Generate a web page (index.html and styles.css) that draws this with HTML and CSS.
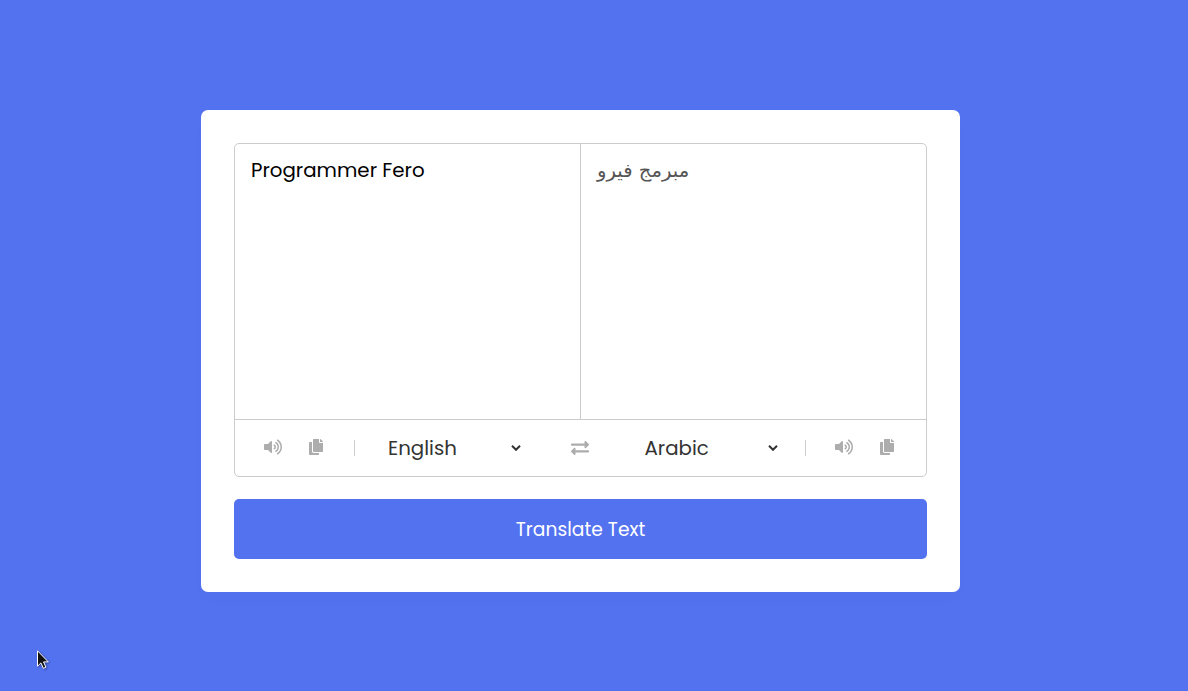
FILE: index.html
```html
<!DOCTYPE html>
<html lang="en">
<head>
<meta charset="utf-8">
<title>Translator</title>
<link rel="stylesheet" href="styles.css">
</head>
<body>
<svg class="sprite" aria-hidden="true">
  <symbol id="volume" viewBox="0 0 576 512"><path d="M215.03 71.05L126.06 160H24c-13.26 0-24 10.74-24 24v144c0 13.25 10.74 24 24 24h102.06l88.97 88.95c15.03 15.03 40.97 4.47 40.97-16.97V88.02c0-21.46-25.96-31.98-40.97-16.97zm233.32-51.08c-11.17-7.33-26.18-4.24-33.51 6.95-7.34 11.17-4.22 26.18 6.95 33.51 66.27 43.49 105.82 116.6 105.82 195.58 0 78.98-39.55 152.09-105.82 195.58-11.17 7.32-14.29 22.34-6.95 33.5 7.04 10.71 21.93 14.56 33.51 6.95C528.27 439.58 576 351.33 576 256S528.27 72.43 448.35 19.97zM480 256c0-63.53-32.06-121.94-85.77-156.24-11.19-7.14-26.03-3.82-33.12 7.46s-3.78 26.21 7.41 33.36C408.27 165.97 432 209.6 432 256s-23.73 90.02-63.48 115.42c-11.19 7.14-14.5 22.07-7.41 33.36 6.51 10.36 21.12 15.14 33.12 7.46C447.94 377.94 480 319.53 480 256zm-141.77-76.87c-11.58-6.33-26.19-2.16-32.61 9.45-6.39 11.61-2.16 26.2 9.45 32.61C327.98 228.28 336 241.63 336 256c0 14.38-8.02 27.72-20.92 34.81-11.61 6.41-15.84 21-9.45 32.61 6.43 11.66 21.05 15.8 32.61 9.45 28.23-15.55 45.77-45 45.77-76.88s-17.54-61.32-45.78-76.86z"/></symbol>
  <symbol id="copy" viewBox="0 0 448 512"><path d="M320 448v40c0 13.255-10.745 24-24 24H24c-13.255 0-24-10.745-24-24V120c0-13.255 10.745-24 24-24h72v296c0 30.879 25.121 56 56 56h168zm0-344V0H152c-13.255 0-24 10.745-24 24v368c0 13.255 10.745 24 24 24h272c13.255 0 24-10.745 24-24V128H344c-13.2 0-24-10.8-24-24zm120.971-31.029L375.029 7.029A24 24 0 0 0 358.059 0H352v96h96v-6.059a24 24 0 0 0-7.029-16.97z"/></symbol>
  <symbol id="chevron" viewBox="0 0 10 6"><path d="M1 .8l4 4 4-4" fill="none" stroke="currentColor" stroke-width="2"/></symbol>
</svg>
<main class="container">
  <div class="wrapper">
    <div class="text-input">
      <div class="field from-text">Programmer Fero</div>
      <div class="field to-text" lang="ar">مبرمج فيرو</div>
    </div>
    <div class="controls">
      <div class="icons from">
        <svg class="icon volume"><use href="#volume"/></svg>
        <svg class="icon copy"><use href="#copy"/></svg>
      </div>
      <div class="select from"><span>English</span><svg class="chevron"><use href="#chevron"/></svg></div>
      <svg class="icon exchange" viewBox="0 0 512 512"><path d="M0 168v-16c0-13.255 10.745-24 24-24h360V80c0-21.367 25.899-32.042 40.971-16.971l80 80c9.372 9.373 9.372 24.569 0 33.941l-80 80C409.956 271.982 384 261.456 384 240v-48H24c-13.255 0-24-10.745-24-24zm488 152H128v-48c0-21.314-25.862-32.08-40.971-16.971l-80 80c-9.372 9.373-9.372 24.569 0 33.941l80 80C102.057 463.997 128 453.437 128 432v-48h360c13.255 0 24-10.745 24-24v-16c0-13.255-10.745-24-24-24z"/></svg>
      <div class="select to"><span>Arabic</span><svg class="chevron"><use href="#chevron"/></svg></div>
      <div class="icons to">
        <svg class="icon volume"><use href="#volume"/></svg>
        <svg class="icon copy"><use href="#copy"/></svg>
      </div>
    </div>
  </div>
  <button class="translate">Translate Text</button>
</main>
<svg class="cursor" viewBox="0 0 12 19"><path d="M.5.8v15.4l3.4-3.3 2.5 5.4 2.5-1.1-2.4-5.3h4.8z" fill="#111" stroke="#fff"/></svg>
</body>
</html>
```
FILE: styles.css
```css
* { box-sizing: border-box; margin: 0; padding: 0; }
body {
  height: 691px;
  padding: 110px 0 0 201px;
  overflow: hidden;
  background: #5372f0;
  font-family: Poppins, Inter, "DejaVu Sans", sans-serif;
}
.sprite { position: absolute; width: 0; height: 0; }
.container {
  width: 759px;
  height: 482px;
  padding: 33px;
  border-radius: 7px;
  background: #fff;
  box-shadow: 0 10px 20px rgba(0, 0, 0, .01);
}
.wrapper { height: 334px; border: 1px solid #ccc; border-radius: 5px; }
.text-input { display: flex; height: 276px; border-bottom: 1px solid #ccc; }
.field { padding: 11px 16px; font-size: 19.8px; line-height: 30px; }
.from-text { width: 346px; border-right: 1px solid #ccc; color: #000; }
.to-text { flex: 1; padding-top: 12px; color: #555; font-family: "DejaVu Sans", sans-serif; font-size: 19.6px; }
.controls { display: flex; align-items: center; height: 56px; color: #333; }
.icons { display: flex; align-items: center; height: 16px; }
.icons.from { width: 120px; padding-left: 28.7px; border-right: 1px solid #ccc; }
.icons.to { width: 121px; padding-left: 29px; border-left: 1px solid #ccc; }
.icon { flex: none; height: 16px; fill: #adadad; }
.volume { width: 18px; margin-top: -2px; }
.copy { width: 14px; margin: -2px 0 0 27.3px; }
.exchange { width: 18px; height: 18px; margin: -1px 55.5px 0 50px; }
.select { display: flex; align-items: center; justify-content: space-between; font-size: 19.8px; line-height: 30px; }
.select.from { width: 133px; margin-left: 33px; }
.select.to { width: 133.5px; margin-right: 27px; }
.chevron { width: 10px; height: 6px; margin-top: 0; }
.translate {
  display: block;
  width: 100%;
  height: 60px;
  margin-top: 22px;
  padding-top: 1px;
  border: 0;
  border-radius: 5px;
  background: #5372f0;
  color: #fff;
  font: 18.7px/30px Poppins, Inter, sans-serif;
}
.cursor { position: absolute; left: 37px; top: 650px; width: 12px; height: 19px; filter: drop-shadow(1px 1px 1px rgba(0, 0, 0, .4)); }
```
